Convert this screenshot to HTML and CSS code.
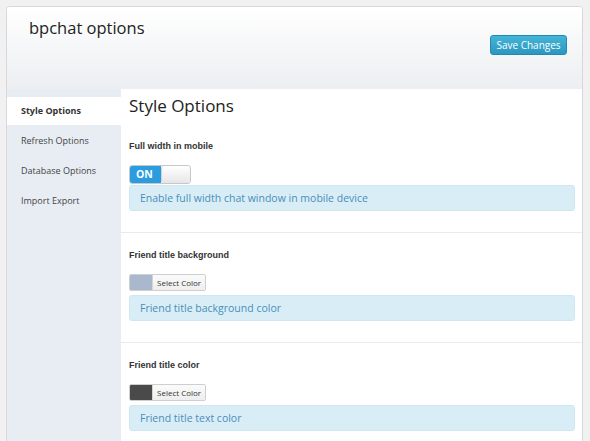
FILE: index.html
```html
<!DOCTYPE html>
<html lang="en">
<head>
    <meta charset="UTF-8">
    <title>bpchat options</title>
    <link rel="stylesheet" href="styles.css">
</head>
<body>
    <div class="wrap">
        <div class="panel">
            <div class="header">
                <h1>bpchat options</h1>
                <button class="save-button">Save Changes</button>
            </div>

            <div class="main">
                <ul class="sidebar">
                    <li class="active">Style Options</li>
                    <li>Refresh Options</li>
                    <li>Database Options</li>
                    <li>Import Export</li>
                </ul>

                <div class="content">
                    <h2>Style Options</h2>

                    <div class="field">
                        <div class="field-label">Full width in mobile</div>
                        <div class="toggle">
                            <span class="toggle-on">ON</span>
                            <span class="toggle-knob"></span>
                        </div>
                        <div class="desc desc-tight">Enable full width chat window in mobile device</div>
                    </div>

                    <div class="field">
                        <div class="field-label">Friend title background</div>
                        <div class="picker">
                            <span class="swatch swatch-light"></span>
                            <span class="picker-text">Select Color</span>
                        </div>
                        <div class="desc">Friend title background color</div>
                    </div>

                    <div class="field">
                        <div class="field-label">Friend title color</div>
                        <div class="picker">
                            <span class="swatch swatch-dark"></span>
                            <span class="picker-text">Select Color</span>
                        </div>
                        <div class="desc">Friend title text color</div>
                    </div>
                </div>
            </div>
        </div>
    </div>
</body>
</html>
```

FILE: styles.css
```css
* {
    margin: 0;
    padding: 0;
    box-sizing: border-box;
}

body {
    font-family: 'Open Sans', 'Liberation Sans', sans-serif;
    background: #f1f1f1;
    color: #333;
}

.wrap {
    padding: 6px 7px 0 6px;
}

.panel {
    background: white;
    border: 1px solid #d8d8d8;
    border-radius: 4px;
    overflow: hidden;
    min-height: 440px;
}

.header {
    height: 82px;
    background: linear-gradient(#ffffff, #eceef1);
    display: flex;
    justify-content: space-between;
    padding: 0 15px 0 22px;
}

.header h1 {
    font-size: 16.5px;
    font-weight: normal;
    color: #222;
    margin-top: 8px;
    line-height: 26px;
}

.save-button {
    margin-top: 28px;
    width: 77px;
    height: 20px;
    font-family: 'Open Sans', 'Liberation Sans', sans-serif;
    font-size: 10px;
    color: white;
    background: linear-gradient(#43b5d8, #2b97c0);
    border: 1px solid #2488b0;
    border-radius: 3px;
}

.main {
    display: flex;
}

.sidebar {
    list-style: none;
    width: 114px;
    flex-shrink: 0;
    background: #e8edf4;
    padding-top: 8px;
    min-height: 360px;
}

.sidebar li {
    height: 28px;
    margin-bottom: 2px;
    line-height: 28px;
    padding-left: 14px;
    font-size: 9px;
    color: #444;
}

.sidebar li.active {
    background: white;
    font-weight: bold;
    color: #333;
}

.content {
    flex: 1;
}

.content h2 {
    font-size: 17px;
    font-weight: normal;
    color: #222;
    line-height: 24px;
    margin: 5px 0 6px 8px;
}

.field {
    padding: 16px 7px 21px 8px;
    border-bottom: 1px solid #ebebeb;
}

.field-label {
    font-family: 'Liberation Sans', sans-serif;
    font-size: 9px;
    font-weight: bold;
    line-height: 12px;
    color: #333;
    margin-bottom: 13px;
}

.toggle {
    display: flex;
    width: 62px;
    height: 19px;
    border: 1px solid #c8c8c8;
    border-radius: 3px;
    overflow: hidden;
}

.toggle-on {
    width: 31px;
    background: #2a9ce0;
    color: white;
    font-size: 10.5px;
    font-weight: bold;
    line-height: 17px;
    padding-left: 6px;
}

.toggle-knob {
    flex: 1;
    background: linear-gradient(#ffffff, #e6e6e6);
    border-left: 1px solid #d0d0d0;
    border-radius: 3px;
}

.picker {
    display: flex;
    width: 77px;
    height: 17px;
    border: 1px solid #cfcfcf;
    border-radius: 2px;
    overflow: hidden;
}

.swatch {
    width: 22px;
}

.swatch-light {
    background: #a9b8cc;
}

.swatch-dark {
    background: #4a4a4a;
}

.picker-text {
    flex: 1;
    background: linear-gradient(#fbfbfb, #eeeeee);
    border-left: 1px solid #d4d4d4;
    font-size: 8px;
    line-height: 15px;
    padding-left: 4px;
    color: #333;
}

.desc {
    height: 26px;
    margin-top: 4px;
    background: #d9edf7;
    border: 1px solid #cfe7f3;
    border-radius: 3px;
    padding-left: 10px;
    font-size: 10.5px;
    line-height: 24px;
    color: #4a8db8;
}

.desc-tight {
    margin-top: 1px;
}
```
